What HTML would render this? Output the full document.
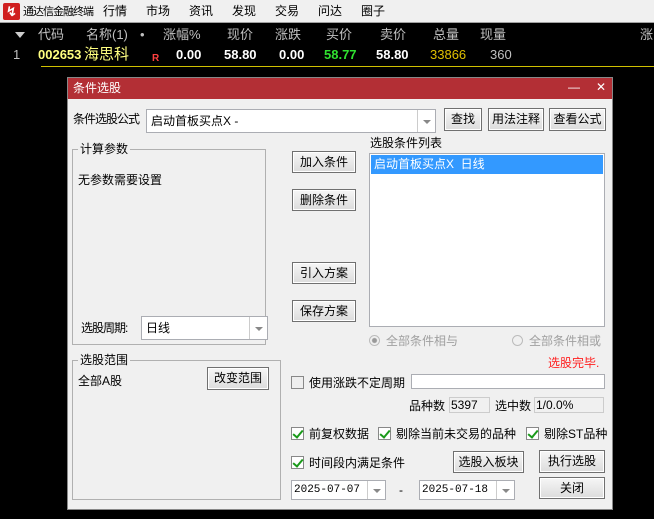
<!DOCTYPE html><html><head><meta charset="utf-8"><style>
*{margin:0;padding:0;box-sizing:border-box}
body{width:654px;height:519px;background:#000;position:relative;overflow:hidden;font-family:"Liberation Sans","Noto Sans CJK SC",sans-serif;font-size:12px;color:#000}
.a{position:absolute;white-space:nowrap}
.menu{position:absolute;left:0;top:0;width:654px;height:23px;background:#f0f0f0;border-bottom:1px solid #a0a0a0}
.menu span{position:absolute;top:4px;font-size:12px;line-height:14px;white-space:nowrap}
.h{position:absolute;top:27px;font-size:13px;line-height:16px;color:#c0c0c0;white-space:nowrap}
.r{position:absolute;top:47px;font-size:13px;line-height:16px;font-weight:bold;white-space:nowrap}
.dlg{position:absolute;left:67px;top:77px;width:546px;height:433px;background:#f0f0f0;border:1px solid #888}
.tb{position:absolute;left:0;top:0;width:100%;height:21px;background:#b32f35;color:#fff;font-size:12px;line-height:15px;padding:3px 5px}
.btn{position:absolute;border:1px solid #707070;background:linear-gradient(#f6f6f6,#dcdcdc);text-align:center;font-size:12px;line-height:20px;box-shadow:inset 0 0 0 1px #fff;white-space:nowrap}
.box{position:absolute;background:#fff;border:1px solid #abadb3}
.grp{position:absolute;border:1px solid #b0b0b0}
.gl{position:absolute;background:#f0f0f0;padding:0 2px;font-size:12px;line-height:14px}
.dd{position:absolute;right:0;top:0;bottom:0;width:18px;border-left:1px solid #ccc}
.dd:after{content:"";position:absolute;left:5px;top:45%;border:4px solid transparent;border-top:4px solid #888}
.cb{position:absolute;width:13px;height:13px;border:1px solid #888;background:#fff}
.cb.c:after{content:"";position:absolute;left:3px;top:0px;width:4px;height:8px;border:solid #1a9a1a;border-width:0 2px 2px 0;transform:rotate(40deg)}
.t{position:absolute;font-size:12px;line-height:14px;white-space:nowrap}
.m{font-family:"Liberation Mono",monospace;font-size:11px}
</style></head><body>
<div class="menu">
<div class="a" style="left:3px;top:3px;width:17px;height:17px;background:#d02020;border-radius:2px;color:#fff;font-size:13px;line-height:17px;text-align:center;font-weight:bold">↯</div>
<span style="left:23px;font-size:11px;letter-spacing:-1px;top:5px">通达信金融终端</span>
<span style="left:103px">行情</span><span style="left:146px">市场</span><span style="left:189px">资讯</span><span style="left:232px">发现</span><span style="left:275px">交易</span><span style="left:318px">问达</span><span style="left:361px">圈子</span>
</div>
<div class="a" style="left:15px;top:32px;border:5px solid transparent;border-top:6px solid #ccc"></div>
<div class="h" style="left:38px">代码</div><div class="h" style="left:86px">名称(1)</div><div class="h" style="left:140px">•</div>
<div class="h" style="left:163px">涨幅%</div><div class="h" style="left:227px">现价</div><div class="h" style="left:275px">涨跌</div><div class="h" style="left:326px">买价</div><div class="h" style="left:380px">卖价</div><div class="h" style="left:433px">总量</div><div class="h" style="left:480px">现量</div><div class="h" style="left:640px">涨</div>
<div class="r" style="left:13px;color:#c0c0c0;font-weight:normal">1</div>
<div class="r" style="left:38px;color:#ffff80">002653</div>
<div class="r" style="left:84px;color:#ffff80;font-weight:normal;font-size:15px;top:46px;line-height:18px">海思科</div>
<div class="r" style="left:152px;color:#ff4040;font-size:10px;top:51px">R</div>
<div class="r" style="left:176px;color:#fff">0.00</div><div class="r" style="left:224px;color:#fff">58.80</div><div class="r" style="left:279px;color:#fff">0.00</div><div class="r" style="left:324px;color:#30e030">58.77</div><div class="r" style="left:376px;color:#fff">58.80</div><div class="r" style="left:430px;color:#e0c000;font-weight:normal">33866</div><div class="r" style="left:490px;color:#c0c0c0;font-weight:normal">360</div>
<div class="a" style="left:41px;top:66px;width:613px;height:1px;background:#d0c000"></div>
<div class="dlg">
<div class="tb">条件选股<span style="position:absolute;right:32px;top:2px">—</span><span style="position:absolute;right:6px;top:2px">✕</span></div>
<div class="t" style="left:5px;top:34px;letter-spacing:-1px">条件选股公式</div>
<div class="box" style="left:78px;top:31px;width:290px;height:24px"><span class="t" style="left:4px;top:4px">启动首板买点X -</span><div class="dd"></div></div>
<div class="btn" style="left:376px;top:30px;width:38px;height:23px">查找</div>
<div class="btn" style="left:420px;top:30px;width:56px;height:23px">用法注释</div>
<div class="btn" style="left:481px;top:30px;width:57px;height:23px">查看公式</div>
<div class="grp" style="left:4px;top:71px;width:194px;height:196px"></div>
<div class="gl" style="left:10px;top:64px">计算参数</div>
<div class="t" style="left:10px;top:95px">无参数需要设置</div>
<div class="t" style="left:13px;top:243px;letter-spacing:-1px">选股周期:</div>
<div class="box" style="left:73px;top:238px;width:127px;height:24px"><span class="t" style="left:4px;top:4px">日线</span><div class="dd"></div></div>
<div class="grp" style="left:4px;top:282px;width:209px;height:140px"></div>
<div class="gl" style="left:10px;top:275px">选股范围</div>
<div class="t" style="left:10px;top:296px">全部A股</div>
<div class="btn" style="left:139px;top:289px;width:62px;height:23px">改变范围</div>
<div class="btn" style="left:224px;top:73px;width:64px;height:22px">加入条件</div>
<div class="btn" style="left:224px;top:111px;width:64px;height:22px">删除条件</div>
<div class="btn" style="left:224px;top:184px;width:64px;height:22px">引入方案</div>
<div class="btn" style="left:224px;top:222px;width:64px;height:22px">保存方案</div>
<div class="t" style="left:302px;top:58px">选股条件列表</div>
<div class="box" style="left:301px;top:75px;width:236px;height:174px"><div style="position:absolute;left:1px;top:1px;right:1px;height:19px;background:#3399ff;color:#fff;font-size:12px;line-height:15px;padding:2px 3px">启动首板买点X&nbsp;&nbsp;日线</div></div>
<div class="t" style="left:301px;top:256px;color:#a0a0a0"><span style="display:inline-block;width:11px;height:11px;border:1px solid #bbb;border-radius:50%;margin-right:6px;vertical-align:-1px;background:radial-gradient(#999 2px,transparent 3px)"></span>全部条件相与</div>
<div class="t" style="left:444px;top:256px;color:#a0a0a0"><span style="display:inline-block;width:11px;height:11px;border:1px solid #bbb;border-radius:50%;margin-right:6px;vertical-align:-1px"></span>全部条件相或</div>
<div class="t" style="left:480px;top:278px;color:#ff2020">选股完毕.</div>
<div class="cb" style="left:223px;top:298px;background:#eee"></div>
<div class="t" style="left:241px;top:298px">使用涨跌不定周期</div>
<div class="box" style="left:343px;top:296px;width:194px;height:15px"></div>
<div class="t" style="left:341px;top:321px">品种数</div>
<div class="box" style="left:381px;top:319px;width:41px;height:16px;background:#f0f0f0;border-color:#ccc"><span class="t" style="left:1px;top:0">5397</span></div>
<div class="t" style="left:427px;top:321px">选中数</div>
<div class="box" style="left:466px;top:319px;width:70px;height:16px;background:#f0f0f0;border-color:#ccc"><span class="t" style="left:1px;top:0">1/0.0%</span></div>
<div class="cb c" style="left:223px;top:349px"></div><div class="t" style="left:241px;top:349px">前复权数据</div>
<div class="cb c" style="left:310px;top:349px"></div><div class="t" style="left:328px;top:349px">剔除当前未交易的品种</div>
<div class="cb c" style="left:458px;top:349px"></div><div class="t" style="left:476px;top:349px">剔除ST品种</div>
<div class="cb c" style="left:223px;top:378px"></div><div class="t" style="left:241px;top:378px">时间段内满足条件</div>
<div class="btn" style="left:385px;top:373px;width:71px;height:22px">选股入板块</div>
<div class="btn" style="left:471px;top:372px;width:66px;height:23px">执行选股</div>
<div class="btn" style="left:471px;top:399px;width:66px;height:22px">关闭</div>
<div class="box" style="left:223px;top:402px;width:95px;height:20px"><span class="t m" style="left:2px;top:2px">2025-07-07</span><div class="dd"></div></div>
<div class="t" style="left:331px;top:405px">-</div>
<div class="box" style="left:351px;top:402px;width:96px;height:20px"><span class="t m" style="left:2px;top:2px">2025-07-18</span><div class="dd"></div></div>
</div>
</body></html>
